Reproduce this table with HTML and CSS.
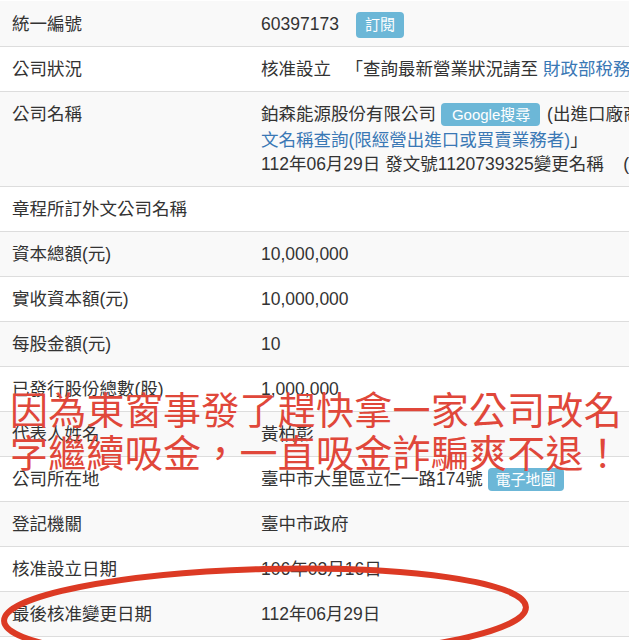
FILE: index.html
```html
<!DOCTYPE html>
<html lang="zh-Hant">
<head>
<meta charset="utf-8">
<title>公司基本資料</title>
<link rel="stylesheet" href="styles.css">
</head>
<body>
<div class="page">
  <div class="table">
    <div class="row"><div class="label">統一編號</div><div class="value">60397173<span class="badge badge-lg">訂閱</span></div></div>
    <div class="row"><div class="label">公司狀況</div><div class="value">核准設立 &nbsp; 「查詢最新營業狀況請至 <a href="#">財政部稅務入口網</a>」</div></div>
    <div class="row row-tall"><div class="label">公司名稱</div><div class="value">
      <div class="line">鉑森能源股份有限公司 <span class="badge badge-wide">Google搜尋</span> (出進口廠商「<a href="#">英</a></div>
      <div class="line"><a href="#">文名稱查詢(限經營出進口或買賣業務者)</a>」</div>
      <div class="line">112年06月29日 發文號1120739325變更名稱 &nbsp;&nbsp;&nbsp;(</div>
    </div></div>
    <div class="row"><div class="label">章程所訂外文公司名稱</div><div class="value"></div></div>
    <div class="row"><div class="label">資本總額(元)</div><div class="value">10,000,000</div></div>
    <div class="row"><div class="label">實收資本額(元)</div><div class="value">10,000,000</div></div>
    <div class="row"><div class="label">每股金額(元)</div><div class="value">10</div></div>
    <div class="row"><div class="label">已發行股份總數(股)</div><div class="value">1,000,000</div></div>
    <div class="row"><div class="label">代表人姓名</div><div class="value">黃柏彰</div></div>
    <div class="row"><div class="label">公司所在地</div><div class="value">臺中市大里區立仁一路174號 <span class="badge">電子地圖</span></div></div>
    <div class="row"><div class="label">登記機關</div><div class="value">臺中市政府</div></div>
    <div class="row"><div class="label">核准設立日期</div><div class="value">106年03月16日</div></div>
    <div class="row"><div class="label">最後核准變更日期</div><div class="value">112年06月29日</div></div>
    <div class="row"><div class="label">&nbsp;</div><div class="value"></div></div>
  </div>

  <div class="caption">因為東窗事發了趕快拿一家公司改名<br>字繼續吸金，一直吸金詐騙爽不退！</div>

  <svg class="circle" width="629" height="120" viewBox="0 0 629 120" aria-hidden="true">
    <ellipse cx="265" cy="66" rx="261" ry="45" fill="none" stroke="#dc3a24" stroke-width="6" transform="rotate(-1.5 265 66)"/>
  </svg>
</div>
</body>
</html>
```

FILE: styles.css
```css
html, body {
  margin: 0;
  padding: 0;
  background: #ffffff;
}
body {
  width: 629px;
  height: 640px;
  overflow: hidden;
  font-family: "Liberation Sans", "Noto Sans CJK TC", sans-serif;
  font-size: 17.5px;
  color: #333333;
}
.page {
  position: relative;
  width: 629px;
  height: 640px;
  overflow: hidden;
}
.table {
  padding-top: 1px;
}
.row {
  display: grid;
  grid-template-columns: 261px 1fr;
  border-top: 1px solid #dddddd;
  background: #ffffff;
  white-space: nowrap;
}
.row:first-child {
  border-top-color: transparent;
}
.row:nth-child(odd) {
  background: #f9f9f9;
}
.label,
.value {
  height: 24px;
  line-height: 24px;
  padding: 10px 0;
  overflow: visible;
}
.label {
  padding-left: 12px;
}
.row-tall .value {
  height: 74px;
  padding-bottom: 10px;
}
.line {
  height: 24px;
  line-height: 24px;
}
.line:first-child {
  height: 26px;
}
a {
  color: #3a78b5;
  text-decoration: none;
}
.badge {
  display: inline-block;
  background: #6cb7d7;
  color: #ffffff;
  font-size: 15px;
  line-height: 21px;
  padding: 1px 8px;
  border-radius: 4px;
  vertical-align: 0;
}
.badge-lg {
  margin-left: 17px;
  padding: 2px 9px 3px;
}
.badge-wide {
  padding: 1px 10px 1px 11px;
  margin-right: 2px;
}
.caption {
  position: absolute;
  left: 10px;
  top: 386px;
  font-family: "Noto Sans CJK TC", sans-serif;
  font-size: 38px;
  letter-spacing: 0.25px;
  line-height: 43px;
  color: #e0473a;
  white-space: nowrap;
}
.circle {
  position: absolute;
  left: 0;
  top: 548px;
}
```
